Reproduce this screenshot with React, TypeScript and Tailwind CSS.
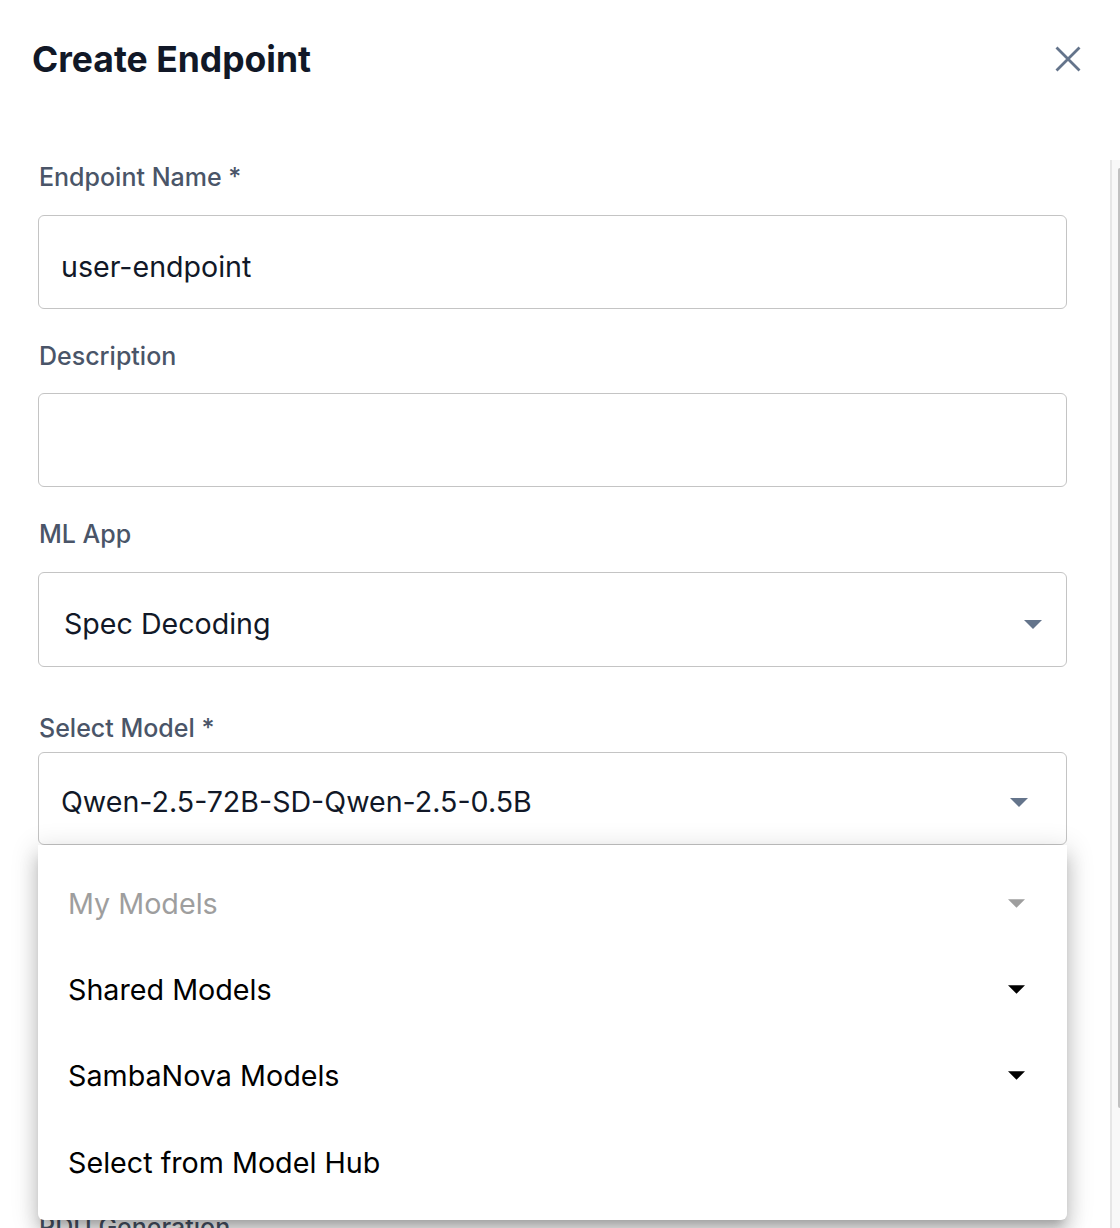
import React from "react";

const Caret = ({ color, className }: { color: string; className?: string }) => (
  <svg width="18" height="9" viewBox="0 0 18 9" className={className}>
    <path d="M0 0 L18 0 L9 9 Z" fill={color} />
  </svg>
);

const Label = ({ children, className = "" }: { children: React.ReactNode; className?: string }) => (
  <div className={`text-[25px] leading-[32px] font-medium text-[#4a5568] ${className}`}>{children}</div>
);

export default function App() {
  return (
    <div
      className="relative w-[1120px] h-[1228px] overflow-hidden bg-white flex flex-col"
      style={{ fontFamily: "Inter, 'Noto Sans', sans-serif" }}
    >
      {/* Header */}
      <div className="h-[160px] shrink-0 flex justify-between items-start pl-[32px] pr-[39px] pt-[40px]">
        <h1 className="text-[35.5px] leading-[40px] font-bold text-[#111827]">Create Endpoint</h1>
        <button className="mt-[6px] w-[26px] h-[26px] flex items-center justify-center">
          <svg width="26" height="26" viewBox="0 0 26 26">
            <path d="M1.5 1.5 L24.5 24.5 M24.5 1.5 L1.5 24.5" stroke="#64748b" strokeWidth="2.8" strokeLinecap="butt" />
          </svg>
        </button>
      </div>

      {/* Body */}
      <div className="flex flex-1 min-h-0">
        <div className="flex-1 pl-[38px] pr-[43px] pt-[1px]">
          <Label className="ml-[1px]">Endpoint Name *</Label>
          <div className="mt-[22px] h-[94px] rounded-[6px] border border-[#c4c4c4] flex items-center pl-[22px] pt-[11px]">
            <span className="text-[28.6px] text-[#111827]">user-endpoint</span>
          </div>

          <Label className="mt-[31px] ml-[1px]">Description</Label>
          <div className="mt-[21px] h-[94px] rounded-[6px] border border-[#c4c4c4]" />

          <Label className="mt-[31px] ml-[1px]">ML App</Label>
          <div className="mt-[22px] h-[95px] rounded-[6px] border border-[#c4c4c4] flex items-center justify-between pl-[25px] pr-[24px] pt-[10px]">
            <span className="text-[28.6px] text-[#111827]">Spec Decoding</span>
            <Caret color="#64748b" />
          </div>

          <Label className="mt-[45px] ml-[1px]">Select Model *</Label>
          <div className="relative mt-[8px]">
            <div className="h-[93px] rounded-[6px] border border-[#c4c4c4] flex items-center justify-between pl-[22px] pr-[38px] pt-[8px]">
              <span className="text-[28.6px] text-[#111827]">Qwen-2.5-72B-SD-Qwen-2.5-0.5B</span>
              <Caret color="#64748b" />
            </div>

            {/* Dropdown menu */}
            <div className="absolute left-0 right-0 top-full z-10 bg-white rounded-b-[6px] pt-[15px] pb-[14px] shadow-[0_9px_10px_-5px_rgba(0,0,0,0.2),0_14px_18px_2px_rgba(0,0,0,0.14),0_5px_26px_4px_rgba(0,0,0,0.12)]">
              {[
                { t: "My Models", c: "#9e9e9e", arrow: true },
                { t: "Shared Models", c: "#000000", arrow: true },
                { t: "SambaNova Models", c: "#000000", arrow: true },
                { t: "Select from Model Hub", c: "#000000", arrow: false },
              ].map((it) => (
                <div key={it.t} className="h-[86.4px] flex items-center justify-between pl-[30px] pr-[42px]">
                  <span className="text-[28.7px]" style={{ color: it.c }}>
                    {it.t}
                  </span>
                  {it.arrow && <Caret color={it.c} className="w-[17px]" />}
                </div>
              ))}
            </div>
          </div>

          <Label className="mt-[366px] ml-[1px]">RDU Generation</Label>
        </div>

        {/* Scrollbar */}
        <div className="w-[10px] shrink-0 border-l-2 border-[#e6e6e6] bg-[#f8f8f8] pt-[8px] pl-[6px]">
          <div className="h-[940px] bg-[#c1c1c1] rounded-l-[3px]" />
        </div>
      </div>
    </div>
  );
}
